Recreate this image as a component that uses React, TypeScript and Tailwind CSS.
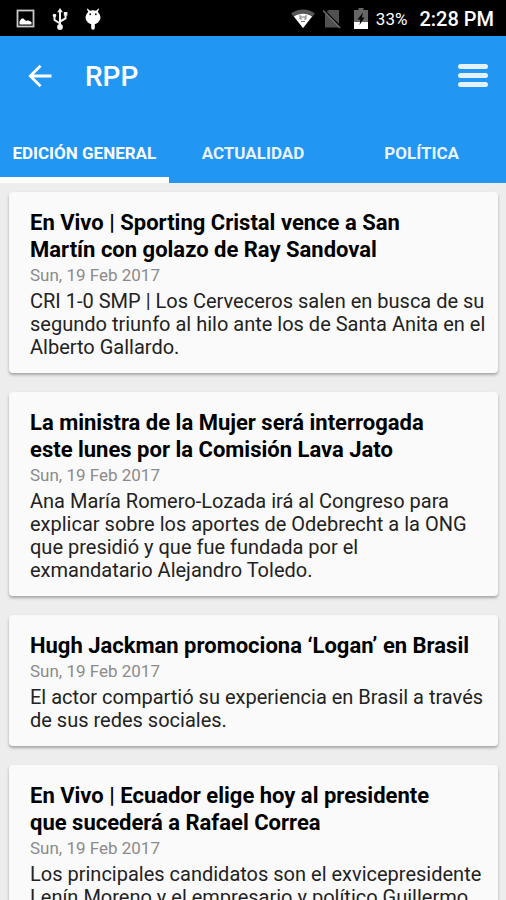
import { useState } from "react";

type Article = { title: string; date: string; summary: string };

const tabs = ["Edición general", "Actualidad", "Política"];

const articles: Article[] = [
  {
    title: "En Vivo | Sporting Cristal vence a San Martín con golazo de Ray Sandoval",
    date: "Sun, 19 Feb 2017",
    summary:
      "CRI 1-0 SMP | Los Cerveceros salen en busca de su segundo triunfo al hilo ante los de Santa Anita en el Alberto Gallardo.",
  },
  {
    title: "La ministra de la Mujer será interrogada este lunes por la Comisión Lava Jato",
    date: "Sun, 19 Feb 2017",
    summary:
      "Ana María Romero-Lozada irá al Congreso para explicar sobre los aportes de Odebrecht a la ONG que presidió y que fue fundada por el\nexmandatario Alejandro Toledo.",
  },
  {
    title: "Hugh Jackman promociona ‘Logan’ en Brasil",
    date: "Sun, 19 Feb 2017",
    summary: "El actor compartió su experiencia en Brasil a través de sus redes sociales.",
  },
  {
    title: "En Vivo | Ecuador elige hoy al presidente que sucederá a Rafael Correa",
    date: "Sun, 19 Feb 2017",
    summary:
      "Los principales candidatos son el exvicepresidente Lenín Moreno y el empresario y político Guillermo",
  },
];

function StatusBar() {
  return (
    <div className="flex h-9 items-center bg-black pl-4 pr-3 pt-px text-white">
      <svg className="h-[19px] w-[19px]" viewBox="0 0 19 19" fill="none">
        <rect x="1.5" y="1.5" width="16" height="16" stroke="#c9c9c9" strokeWidth="1.8" />
        <path d="M3.500 15.500v-3l1.500-2.500 2-.8 2 1.800 1.500 1 1.500-.8 3.500 1.800v2.500z" fill="#fff" />
      </svg>
      <svg className="ml-[17px] h-[22px] w-4" viewBox="0 0 16 22" fill="none" stroke="#f2f2f2" strokeWidth="2">
        <path d="M8 3v15M8 15.500L2.500 12V8M8 13.500l5.500-3V6" />
        <path d="M8 0l2.800 4.200H5.200z" fill="#f2f2f2" stroke="none" />
        <circle cx="8" cy="19" r="2.900" fill="#f2f2f2" stroke="none" />
        <circle cx="2.500" cy="7.500" r="1.800" fill="#f2f2f2" stroke="none" />
        <rect x="11.800" y="4" width="3.600" height="3.600" fill="#f2f2f2" stroke="none" />
      </svg>
      <svg className="ml-4 h-[22px] w-[18px]" viewBox="0 0 18 22">
        <path
          d="M3.500.5L6 2.800a8 8 0 0 1 6 0L14.500.5l.6.5-1.300 2.900A7.200 7.200 0 0 1 16.500 9c0 3.500-2.500 6.300-5.700 7.200V20a1.800 1.800 0 0 1-3.600 0v-3.800C4 15.300 1.500 12.500 1.500 9a7.200 7.200 0 0 1 2.700-5.100L2.900 1z"
          fill="#fff"
        />
        <circle cx="6.200" cy="6.200" r="1" fill="#222" />
        <circle cx="11.800" cy="6.200" r="1" fill="#222" />
      </svg>
      <svg className="ml-auto h-[19px] w-6" viewBox="0 0 24 19">
        <path d="M0 4.500C7-1 17-1 24 4.500L12 19z" fill="#565656" />
        <path d="M3 7.500C8.500 3.800 15.500 3.800 21 7.500L12 19z" fill="#fff" />
        <path d="M9 6v4h2.200M15 6v4h-2.200M9 8h6M10 12.500h4" stroke="#777" strokeWidth="1" fill="none" />
      </svg>
      <svg className="ml-2 h-5 w-[18px]" viewBox="0 0 18 20">
        <path d="M5.500 1H16v17.500H2V5z" fill="#505050" />
        <path d="M1.500 1.500l17 17" stroke="#000" strokeWidth="1.500" />
        <path d="M0 1.500l17 17.500" stroke="#6c6c6c" strokeWidth="1.500" />
      </svg>
      <svg className="ml-[13px] h-[21px] w-[14px]" viewBox="0 0 14 21">
        <path d="M4.500 0h5v2H14v19H0V2h4.500z" fill="#666" />
        <path d="M0 14h14v7H0z" fill="#fff" />
        <path d="M9 4.500L3.500 11.500h3L5.500 17 10.500 9.500H7.800z" fill="#000" />
      </svg>
      <span className="ml-2 text-[17px] leading-5">33%</span>
      <span className="ml-3 text-[20px] font-medium leading-6">2:28 PM</span>
    </div>
  );
}

function ArticleCard({ title, date, summary }: Article) {
  return (
    <article className="rounded-[4px] bg-[#fafafa] pb-[14px] pl-[21px] pr-2 pt-[17px] shadow-[0_2px_3px_rgba(0,0,0,0.3)]">
      <h2 className="text-balance text-[22px] font-bold leading-[27px] text-black">{title}</h2>
      <time className="mb-[3px] block text-[17px] leading-6 text-[#8b8b8b]">{date}</time>
      <p className="whitespace-pre-line text-[20px] leading-[23px] text-[#222]">{summary}</p>
    </article>
  );
}

export default function App() {
  const [active, setActive] = useState(0);
  return (
    <div className="h-screen overflow-hidden bg-[#ededed] font-['Roboto',sans-serif]">
      <StatusBar />
      <header className="bg-[#2196f3] text-white">
        <div className="flex h-[79px] items-center pl-7 pr-[18px]">
          <button type="button" aria-label="Atrás">
            <svg className="h-6 w-6" viewBox="0 0 24 24" fill="none" stroke="#fff" strokeWidth="2.800">
              <path d="M23.500 12H3M12.500 1.800L2.300 12l10.200 10.200" />
            </svg>
          </button>
          <h1 className="ml-[33px] pt-[2px] text-[28px] font-medium leading-8">RPP</h1>
          <button type="button" aria-label="Menú" className="ml-auto flex flex-col gap-1">
            <span className="h-[5px] w-[30px] rounded-full bg-[#e3f2fd]" />
            <span className="h-[5px] w-[30px] rounded-full bg-[#e3f2fd]" />
            <span className="h-[5px] w-[30px] rounded-full bg-[#e3f2fd]" />
          </button>
        </div>
        <nav className="grid grid-cols-3">
          {tabs.map((tab, i) => (
            <button
              key={tab}
              type="button"
              onClick={() => setActive(i)}
              className={`h-[68px] whitespace-nowrap border-b-[6px] pt-[13px] text-[17px] font-bold uppercase leading-5 ${
                i === active ? "border-white text-white" : "border-transparent text-[#e9f4fe]"
              }`}
            >
              {tab}
            </button>
          ))}
        </nav>
      </header>
      <main className="flex flex-col gap-[19px] pl-[9px] pr-2 pt-[9px]">
        {articles.map((article) => (
          <ArticleCard key={article.title} {...article} />
        ))}
      </main>
    </div>
  );
}
